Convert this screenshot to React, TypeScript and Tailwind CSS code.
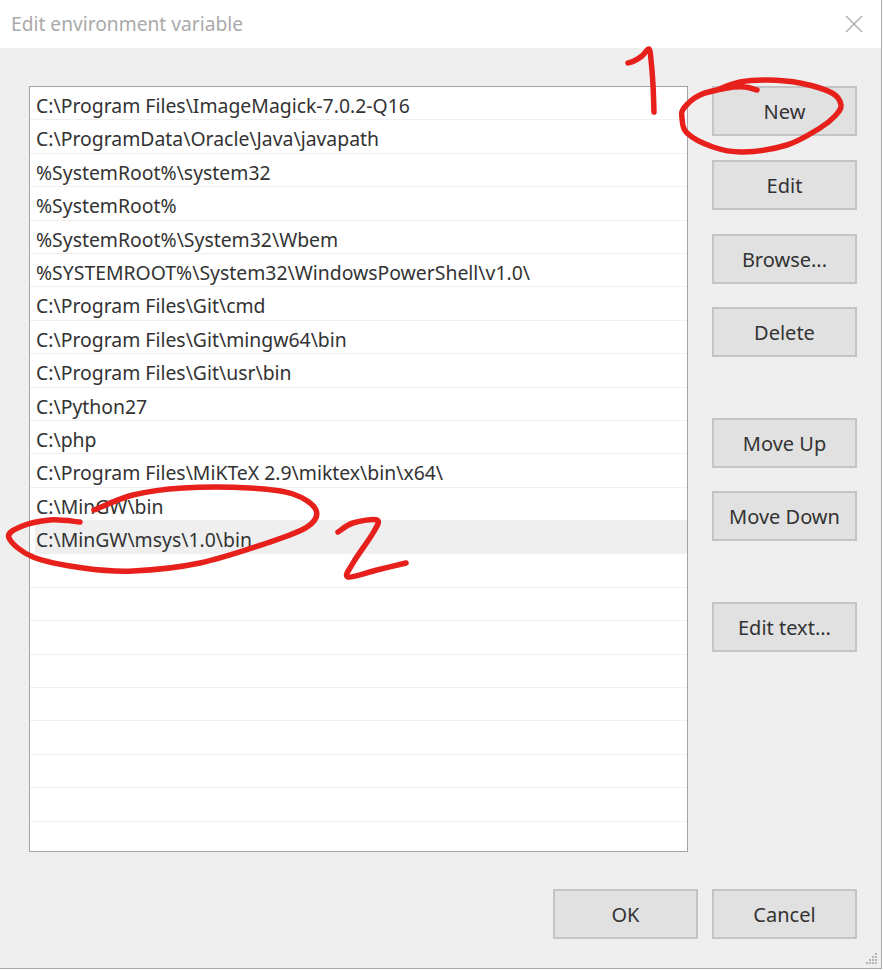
import React from 'react';

const paths = [
    'C:\\Program Files\\ImageMagick-7.0.2-Q16',
    'C:\\ProgramData\\Oracle\\Java\\javapath',
    '%SystemRoot%\\system32',
    '%SystemRoot%',
    '%SystemRoot%\\System32\\Wbem',
    '%SYSTEMROOT%\\System32\\WindowsPowerShell\\v1.0\\',
    'C:\\Program Files\\Git\\cmd',
    'C:\\Program Files\\Git\\mingw64\\bin',
    'C:\\Program Files\\Git\\usr\\bin',
    'C:\\Python27',
    'C:\\php',
    'C:\\Program Files\\MiKTeX 2.9\\miktex\\bin\\x64\\',
    'C:\\MinGW\\bin',
    'C:\\MinGW\\msys\\1.0\\bin',
    '', '', '', '', '', '', '', '', '',
];

type Pt = [number, number];

// catmull-rom through the points, good enough for marker scribbles
const smooth = (pts: Pt[]) => {
    let d = `M${pts[0][0]} ${pts[0][1]}`;
    for (let i = 0; i < pts.length - 1; i++) {
        const p0 = pts[Math.max(i - 1, 0)];
        const p1 = pts[i];
        const p2 = pts[i + 1];
        const p3 = pts[Math.min(i + 2, pts.length - 1)];
        const c1x = p1[0] + (p2[0] - p0[0]) / 6;
        const c1y = p1[1] + (p2[1] - p0[1]) / 6;
        const c2x = p2[0] - (p3[0] - p1[0]) / 6;
        const c2y = p2[1] - (p3[1] - p1[1]) / 6;
        d += ` C${c1x} ${c1y} ${c2x} ${c2y} ${p2[0]} ${p2[1]}`;
    }
    return d;
};

const scribbles: Pt[][] = [
    [[628, 63], [634, 61], [642, 56], [649, 49], [651, 60], [653, 85], [654, 112]],
    [[757, 90], [745, 87], [727, 88], [700, 95], [684, 108], [682, 118], [687, 133], [713, 147], [743, 152], [787, 145], [820, 128], [835, 116], [841, 105], [832, 93], [800, 83], [767, 80], [740, 82], [717, 90]],
    [[94, 510], [133, 495], [183, 488], [250, 488], [293, 494], [316, 510], [307, 527], [267, 543], [200, 563], [133, 571], [83, 568], [33, 557], [9, 538], [20, 527], [50, 520], [80, 522]],
    [[338, 532], [353, 523], [377, 520], [373, 533], [353, 563], [348, 577], [377, 570], [406, 563]],
];

const Btn = ({ label, className = '' }: { label: string; className?: string }) => (
    <button className={`w-[145px] h-[50px] pt-[2px] bg-[#e1e1e1] border-2 border-[#c4c4c4] text-[20px] text-[#333] ${className}`}>
        {label}
    </button>
);

const App: React.FC = () => {
    return (
        <div className="relative w-[883px] h-[971px] bg-white overflow-hidden font-['Noto_Sans','Open_Sans',sans-serif]">
            <div className="w-[882px] h-[969px] flex flex-col border-r border-b border-[#a8a8a8]">
                {/* Title bar */}
                <div className="h-[48px] shrink-0 bg-white flex items-center justify-between pl-[11px] pr-[18px]">
                    <span className="text-[19.2px] text-[#aaa]">Edit environment variable</span>
                    <svg width="18" height="18" viewBox="0 0 18 18" className="text-[#aaa]">
                        <path d="M1 1 L17 17 M17 1 L1 17" stroke="currentColor" strokeWidth="1.3" fill="none" />
                    </svg>
                </div>

                {/* Body */}
                <div className="relative flex-1 bg-[#efefef] pt-[38px] pl-[29px] flex flex-col">
                    <div className="flex items-start">
                        <div className="w-[659px] h-[766px] shrink-0 bg-white border-[1.5px] border-[#a0a4a8] overflow-hidden">
                            {paths.map((p, i) => (
                                <div key={i} className="h-[33.4px] pl-[5px] border-b border-[#f0f0f0]">
                                    <div
                                        className={`h-full pl-[1px] pt-[5px] flex items-center text-[19.4px] leading-none text-[#333] whitespace-nowrap ${i === 13 ? 'bg-[#efefef]' : ''}`}
                                    >
                                        {p}
                                    </div>
                                </div>
                            ))}
                        </div>
                        <div className="ml-[24px] flex flex-col">
                            <Btn label="New" />
                            <Btn label="Edit" className="mt-[24px]" />
                            <Btn label="Browse..." className="mt-[24px]" />
                            <Btn label="Delete" className="mt-[23px]" />
                            <Btn label="Move Up" className="mt-[61px]" />
                            <Btn label="Move Down" className="mt-[23px]" />
                            <Btn label="Edit text..." className="mt-[61px]" />
                        </div>
                    </div>
                    <div className="flex justify-end gap-[14px] mt-[37px] pr-[24px]">
                        <Btn label="OK" />
                        <Btn label="Cancel" />
                    </div>

                    {/* Resize grip */}
                    <svg width="12" height="12" viewBox="0 0 12 12" className="absolute right-[3px] bottom-[3px] text-[#b5b5b5]">
                        <path d="M9 0h2v2H9zM6 3h2v2H6zM9 3h2v2H9zM3 6h2v2H3zM6 6h2v2H6zM9 6h2v2H9zM0 9h2v2H0zM3 9h2v2H3zM6 9h2v2H6zM9 9h2v2H9z" fill="currentColor" />
                    </svg>
                </div>
            </div>

            {/* Red marker annotations */}
            <svg width="883" height="971" viewBox="0 0 883 971" className="absolute inset-0 pointer-events-none">
                {scribbles.map((s, i) => (
                    <path key={i} d={smooth(s)} fill="none" stroke="#e8201c" strokeWidth="5.5" strokeLinecap="round" strokeLinejoin="round" />
                ))}
            </svg>
        </div>
    );
};

export default App;
